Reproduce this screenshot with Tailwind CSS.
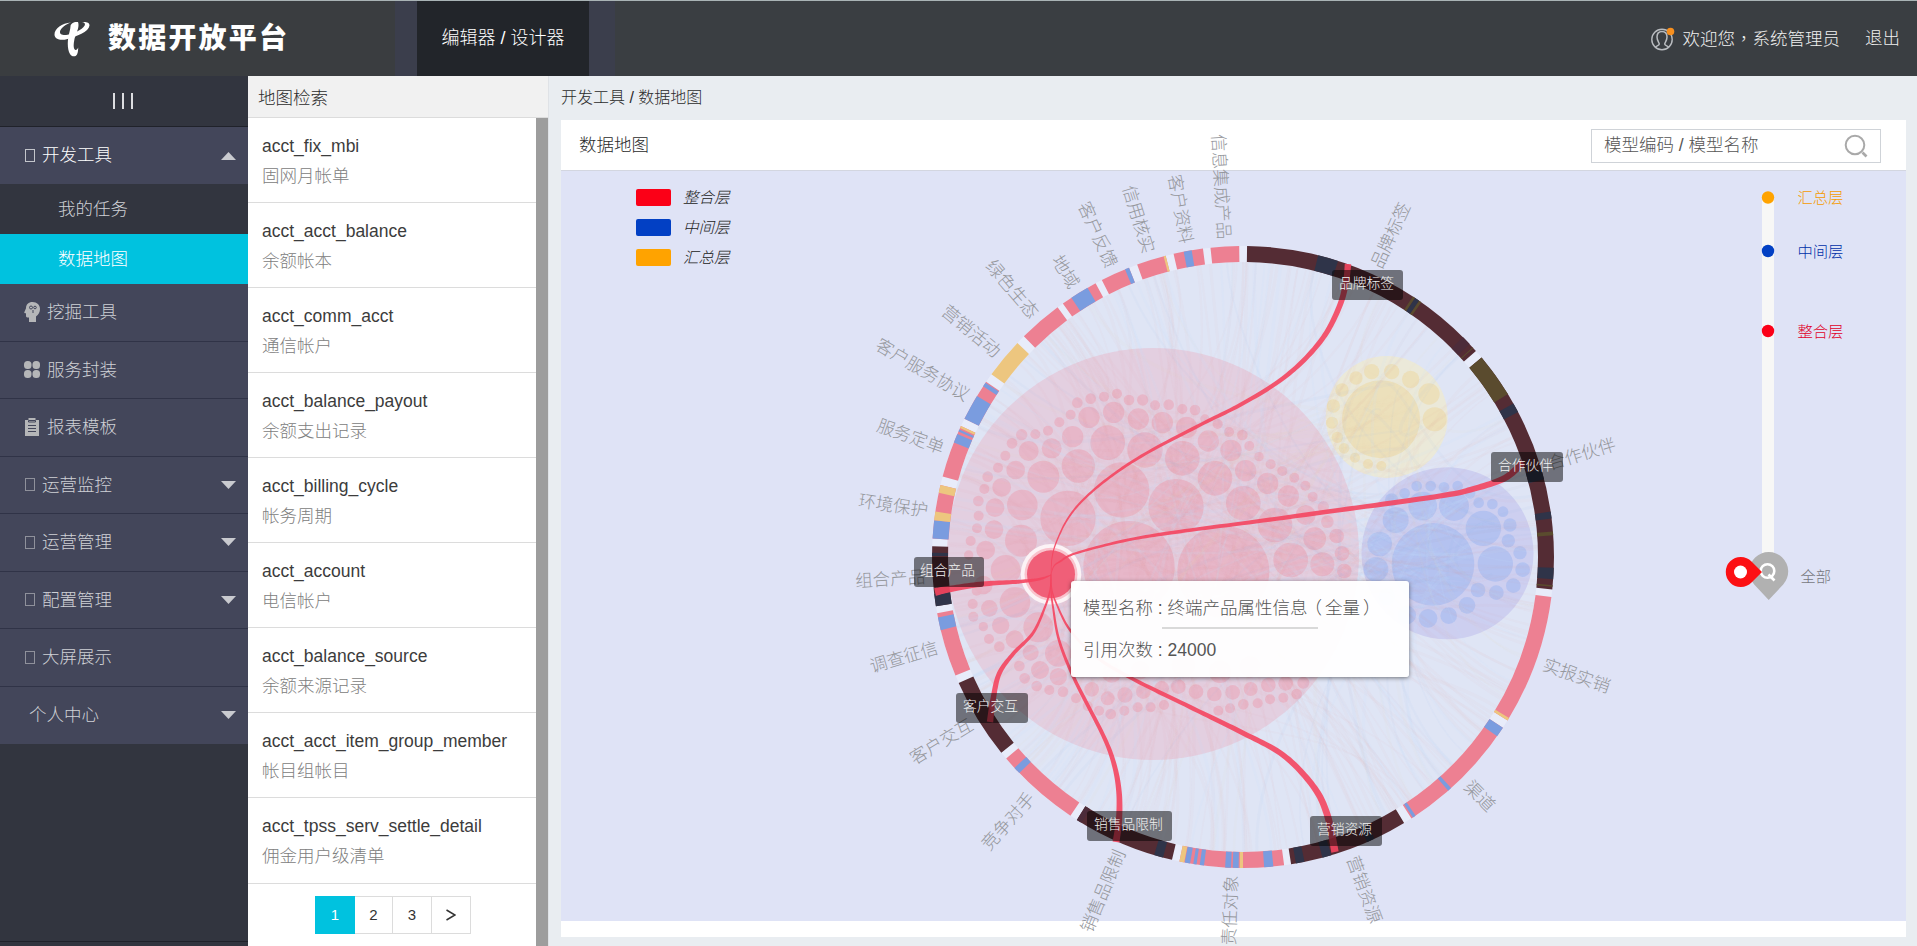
<!DOCTYPE html>
<html lang="zh-CN">
<head>
<meta charset="utf-8">
<title>数据开放平台</title>
<script src="https://cdn.jsdelivr.net/npm/@tailwindcss/browser@4"></script>
</head>
<body class="h-[946px] overflow-hidden bg-[#e9edf1] font-['Liberation_Sans','Noto_Sans_CJK_SC',sans-serif] text-[17.5px] font-light text-[#2b2b2b]">
<div class="flex h-[946px] flex-col overflow-hidden">

  <header class="flex h-[76px] shrink-0 border-t border-[#a9b3b5] bg-[#3a3e42] text-white">
    <div class="flex w-[395px] items-center bg-[#3a3d40] pl-[54px]">
      <svg class="h-[36px] w-[36px]" viewBox="0 0 36 36" fill="#fff">
        <path d="M17 1.500C8 2 .5 7.500.5 13.500c0 5 6.500 6.500 13 4.500C22 15.500 35 11 35.500 4.500 35.800 1.500 32 .5 28 1c3 .5 3.500 2 2.500 3.800C28 9 20 12.500 13.500 13.800 9 14.700 5.500 13.500 6 10.500 6.500 7 11.500 3.500 17 1.500z"/>
        <path d="M24 1c-4-.5-7.500 1.500-7.500 4.500 0 3-2 8-2.500 13-.6 6 0 11 2 14.500 1.500 2.800 5.500 3.200 7 .5 1.200-2.300 1-5 1.300-7-1 1.800-2 3-3.300 2.200-1.800-1.200-1.500-6-.7-9.700C21.500 13 26 6.500 24 1z"/>
      </svg>
      <span class="ml-[18px] text-[28px] leading-none font-black tracking-[2.2px] whitespace-nowrap">数据开放平台</span>
    </div>
    <div class="w-[22px] bg-[#3b3e4c]"></div>
    <div class="flex w-[172px] items-center justify-center bg-[#22252a] text-[18px]">编辑器 / 设计器</div>
    <div class="w-[26px] bg-[#3b3e4c]"></div>
    <div class="flex flex-1 items-center justify-end pr-[17px] text-[#f0f0f0]">
      <svg class="mr-[8px] h-[24px] w-[24px]" viewBox="0 0 24 24" fill="none">
        <circle cx="11" cy="12.500" r="10.200" stroke="#b9bcc0" stroke-width="1.400"/>
        <path d="M4.500 20.500c0-1.600 3.800-1.600 3.800-3.400 0-1.600-2.300-3.200-2.300-7C6 6.500 8 4.500 11 4.500s5 2 5 5.600c0 3.800-2.300 5.400-2.300 7 0 1.800 3.800 1.800 3.800 3.400" stroke="#b9bcc0" stroke-width="1.500"/>
        <circle cx="19.500" cy="4.500" r="3.800" fill="#f78f1e"/>
      </svg>
      <span>欢迎您<span class="font-['Noto_Sans_CJK_TC',sans-serif]" lang="zh-TW">，</span>系统管理员</span>
      <span class="ml-[25px]">退出</span>
    </div>
  </header>

  <div class="flex min-h-0 flex-1">
    <aside class="flex w-[248px] shrink-0 flex-col bg-[#32353f] text-[#cfd1d6]">
      <div class="flex h-[51px] items-center justify-center gap-[7px] border-b border-[#20222a] pr-[2px]">
        <i class="h-[16px] w-[2px] bg-[#dcdde0]"></i><i class="h-[16px] w-[2px] bg-[#dcdde0]"></i><i class="h-[16px] w-[2px] bg-[#dcdde0]"></i>
      </div>
      <div class="flex h-[57px] items-center bg-[#43465a] pl-[25px] text-white">
        <i class="h-[13px] w-[10px] border border-[#c3c5cb]"></i><span class="ml-[7px]">开发工具</span>
        <svg class="mr-[12px] ml-auto h-[8px] w-[15px]" viewBox="0 0 15 8"><path d="M0 8h15L7.500 0z" fill="#c9cacf"/></svg>
      </div>
      <div class="flex h-[50px] items-center pl-[58px]">我的任务</div>
      <div class="flex h-[50px] items-center bg-[#00c2df] pl-[58px] text-white">数据地图</div>
      <div class="flex h-[57.5px] items-center border-b border-[#303347] bg-[#43465a] pl-[24px]">
        <svg class="h-[20px] w-[16px]" viewBox="0 0 16 20"><path d="M8.500 0C4.500 0 2 2.500 2 6.200L.3 10.300c-.2.600.1.900.6.900H2V14c0 .9.500 1.400 1.300 1.400H5V20h7v-5.500c2.500-1.700 4-4.500 4-7.500C16 3 13 0 8.500 0z" fill="#b5b6b8"/><g fill="none" stroke="#43465a"><circle cx="7" cy="5.500" r="1.500"/><circle cx="11" cy="5.500" r="1.300"/><path d="M9 8v3"/></g></svg>
        <span class="ml-[7px]">挖掘工具</span>
      </div>
      <div class="flex h-[57.5px] items-center border-b border-[#303347] bg-[#43465a] pl-[24px]">
        <svg class="h-[17px] w-[16px]" viewBox="0 0 16 17" fill="#b5b6b8"><rect width="7.500" height="8" rx="3.500"/><rect x="8.500" width="7.500" height="8" rx="3.500"/><rect y="9" width="7.500" height="8" rx="3.500"/><rect x="8.500" y="9" width="7.500" height="8" rx="3.500"/></svg>
        <span class="ml-[7px]">服务封装</span>
      </div>
      <div class="flex h-[57.5px] items-center border-b border-[#303347] bg-[#43465a] pl-[25px]">
        <svg class="h-[18px] w-[14px]" viewBox="0 0 14 18"><path d="M0 2h3.500V0h7v2H14v16H0z" fill="#b5b6b8"/><path d="M3.500 2.500h7v1.500h-7zM3 7.500h8M3 10.500h8M3 13.500h8" stroke="#43465a" fill="none"/></svg>
        <span class="ml-[8px]">报表模板</span>
      </div>
      <div class="flex h-[57.5px] items-center border-b border-[#303347] bg-[#43465a] pl-[25px]">
        <i class="h-[13px] w-[10px] border border-[#8f919b]"></i><span class="ml-[7px]">运营监控</span>
        <svg class="mr-[12px] ml-auto h-[8px] w-[15px]" viewBox="0 0 15 8"><path d="M0 0h15L7.500 8z" fill="#c9cacf"/></svg>
      </div>
      <div class="flex h-[57.5px] items-center border-b border-[#303347] bg-[#43465a] pl-[25px]">
        <i class="h-[13px] w-[10px] border border-[#8f919b]"></i><span class="ml-[7px]">运营管理</span>
        <svg class="mr-[12px] ml-auto h-[8px] w-[15px]" viewBox="0 0 15 8"><path d="M0 0h15L7.500 8z" fill="#c9cacf"/></svg>
      </div>
      <div class="flex h-[57.5px] items-center border-b border-[#303347] bg-[#43465a] pl-[25px]">
        <i class="h-[13px] w-[10px] border border-[#8f919b]"></i><span class="ml-[7px]">配置管理</span>
        <svg class="mr-[12px] ml-auto h-[8px] w-[15px]" viewBox="0 0 15 8"><path d="M0 0h15L7.500 8z" fill="#c9cacf"/></svg>
      </div>
      <div class="flex h-[57.5px] items-center border-b border-[#303347] bg-[#43465a] pl-[25px]">
        <i class="h-[13px] w-[10px] border border-[#8f919b]"></i><span class="ml-[7px]">大屏展示</span>
      </div>
      <div class="flex h-[57.5px] items-center bg-[#43465a] pl-[29px]">
        <span>个人中心</span>
        <svg class="mr-[12px] ml-auto h-[8px] w-[15px]" viewBox="0 0 15 8"><path d="M0 0h15L7.500 8z" fill="#c9cacf"/></svg>
      </div>
      <div class="mt-auto mb-[4px] h-[1px] bg-[#20222a]"></div>
    </aside>

    <section class="flex w-[300px] shrink-0 flex-col bg-white">
      <div class="flex h-[42px] shrink-0 items-center border-b border-[#dcdcdc] bg-[#f1f1f1] pt-[4px] pl-[10px]">地图检索</div>
      <div class="flex min-h-0 flex-1">
        <div class="w-[288px]">
          <div class="flex h-[85px] flex-col justify-center border-b border-[#dcdcdc] pt-[2px] pl-[14px] leading-[30px]"><span class="text-[#3c3c3c]">acct_fix_mbi</span><span class="text-[#808080]">固网月帐单</span></div>
          <div class="flex h-[85px] flex-col justify-center border-b border-[#dcdcdc] pt-[2px] pl-[14px] leading-[30px]"><span class="text-[#3c3c3c]">acct_acct_balance</span><span class="text-[#808080]">余额帐本</span></div>
          <div class="flex h-[85px] flex-col justify-center border-b border-[#dcdcdc] pt-[2px] pl-[14px] leading-[30px]"><span class="text-[#3c3c3c]">acct_comm_acct</span><span class="text-[#808080]">通信帐户</span></div>
          <div class="flex h-[85px] flex-col justify-center border-b border-[#dcdcdc] pt-[2px] pl-[14px] leading-[30px]"><span class="text-[#3c3c3c]">acct_balance_payout</span><span class="text-[#808080]">余额支出记录</span></div>
          <div class="flex h-[85px] flex-col justify-center border-b border-[#dcdcdc] pt-[2px] pl-[14px] leading-[30px]"><span class="text-[#3c3c3c]">acct_billing_cycle</span><span class="text-[#808080]">帐务周期</span></div>
          <div class="flex h-[85px] flex-col justify-center border-b border-[#dcdcdc] pt-[2px] pl-[14px] leading-[30px]"><span class="text-[#3c3c3c]">acct_account</span><span class="text-[#808080]">电信帐户</span></div>
          <div class="flex h-[85px] flex-col justify-center border-b border-[#dcdcdc] pt-[2px] pl-[14px] leading-[30px]"><span class="text-[#3c3c3c]">acct_balance_source</span><span class="text-[#808080]">余额来源记录</span></div>
          <div class="flex h-[85px] flex-col justify-center border-b border-[#dcdcdc] pt-[2px] pl-[14px] leading-[30px]"><span class="text-[#3c3c3c]">acct_acct_item_group_member</span><span class="text-[#808080]">帐目组帐目</span></div>
          <div class="flex h-[86px] flex-col justify-center border-b border-[#dcdcdc] pt-[1px] pl-[14px] leading-[30px]"><span class="text-[#3c3c3c]">acct_tpss_serv_settle_detail</span><span class="text-[#808080]">佣金用户级清单</span></div>
          <div class="mt-[12px] ml-[67px] flex h-[38px] text-[15px] text-[#333]">
            <span class="flex w-[40px] items-center justify-center bg-[#00c2df] text-white">1</span>
            <span class="flex w-[38px] items-center justify-center border-y border-r border-[#dcdcdc]">2</span>
            <span class="flex w-[39px] items-center justify-center border-y border-r border-[#dcdcdc]">3</span>
            <span class="flex w-[39px] items-center justify-center border-y border-r border-[#dcdcdc]"><svg class="h-[12px] w-[10px]" viewBox="0 0 10 12" fill="none" stroke="#333" stroke-width="1.500"><path d="M.5 1l8.500 5-8.500 5"/></svg></span>
          </div>
        </div>
        <div class="w-[12px] bg-[#9d9d9d]"></div>
      </div>
    </section>

    <main class="flex flex-1 flex-col border-l border-[#dfe2e6] pr-[11px] pl-[12px]">
      <div class="flex h-[44px] shrink-0 items-center text-[16px]">开发工具 / 数据地图</div>
      <div class="flex h-[817px] flex-col bg-white">
        <div class="flex h-[51px] shrink-0 items-center justify-between border-b border-[#d3d6e0] pr-[25px] pl-[18px]">
          <span>数据地图</span>
          <div class="mt-[1px] flex h-[34px] w-[290px] items-center justify-between border border-[#cfd3d8] pr-[12px] pl-[12px] text-[#555]">
            <span>模型编码 / 模型名称</span>
            <svg class="h-[24px] w-[24px]" viewBox="0 0 24 24" fill="none" stroke="#a9a9a9"><circle cx="11" cy="11" r="9.300" stroke-width="2"/><path d="M18.500 18.500l4 4" stroke-width="2.600"/></svg>
          </div>
        </div>

        <div class="relative h-[750px] bg-[#dfe3f6]">
          <svg class="absolute inset-0 h-[750px] w-[1345px] overflow-visible" viewBox="561 171 1345 750">
            <g id="disc"></g>
            <g id="bubbles"></g>
            <g id="chords" fill="none"></g>
            <g id="ring"></g>
            <g id="labels" fill="#95979c" font-size="17.500"></g>
            <circle cx="1051" cy="574.300" r="30.300" fill="#fcf3f6"/>
            <circle cx="1051" cy="574.300" r="26.500" fill="#f9c3cd"/>
            <circle cx="1051" cy="574.300" r="24" fill="#f05f78"/>
            <g id="links" fill="#f4455f" fill-opacity=".9"></g>
          </svg>

          <div class="absolute top-[18px] left-[75px] flex flex-col gap-[13px] text-[15.5px] leading-[17px] text-[#222] italic">
            <div class="flex items-center"><i class="mr-[12px] h-[17px] w-[35px] rounded-[2px] bg-[#fb0017]"></i>整合层</div>
            <div class="flex items-center"><i class="mr-[12px] h-[17px] w-[35px] rounded-[2px] bg-[#0240c4]"></i>中间层</div>
            <div class="flex items-center"><i class="mr-[12px] h-[17px] w-[35px] rounded-[2px] bg-[#ffa300]"></i>汇总层</div>
          </div>

          <svg class="absolute top-0 left-[1150px] h-[440px] w-[195px]" viewBox="1711 171 195 440">
            <rect x="1762" y="197" width="12" height="356" fill="#f7f7f6"/>
            <circle cx="1768" cy="197.500" r="6.200" fill="#ffa300"/>
            <circle cx="1768" cy="251" r="6.200" fill="#0240c4"/>
            <circle cx="1768" cy="331" r="6.200" fill="#fb0017"/>
            <path d="M1768.700 600l-14.500-15.500a19.500 19.500 0 1 1 29 0z" fill="#b1b1b1"/>
            <circle cx="1767.500" cy="571" r="6.800" fill="none" stroke="#fff" stroke-width="2.600"/>
            <path d="M1768.500 574.500l6 6" stroke="#fff" stroke-width="2.600"/>
            <path d="M1762 572l-10.500 10.500a15 15 0 1 1 0-21z" fill="#fc1013"/>
            <circle cx="1740.500" cy="572" r="6.500" fill="#fff"/>
            <g font-size="15.300"><text x="1797.500" y="203" fill="#f59a00">汇总层</text><text x="1797.500" y="256.500" fill="#0030a8">中间层</text><text x="1797.500" y="336.500" fill="#e00028">整合层</text><text x="1800.500" y="582" fill="#77787e">全部</text></g>
          </svg>

          <div class="absolute top-[99px] left-[771px] flex h-[30px] w-[71px] items-center rounded-[3px] bg-black/50 pb-[2px] pl-[7px] text-[13.75px] text-[#f2f2f2]">品牌标签</div>
          <div class="absolute top-[281px] left-[930px] flex h-[30px] w-[72px] items-center rounded-[3px] bg-black/50 pb-[2px] pl-[7px] text-[13.75px] text-[#f2f2f2]">合作伙伴</div>
          <div class="absolute top-[386px] left-[353px] flex h-[30px] w-[70px] items-center rounded-[3px] bg-black/50 pb-[2px] pl-[6px] text-[13.75px] text-[#f2f2f2]">组合产品</div>
          <div class="absolute top-[522px] left-[395px] flex h-[30px] w-[72px] items-center rounded-[3px] bg-black/50 pb-[2px] pl-[7px] text-[13.75px] text-[#f2f2f2]">客户交互</div>
          <div class="absolute top-[640px] left-[526px] flex h-[30px] w-[85px] items-center rounded-[3px] bg-black/50 pb-[2px] pl-[7px] text-[13.75px] text-[#f2f2f2]">销售品限制</div>
          <div class="absolute top-[645px] left-[749px] flex h-[30px] w-[72px] items-center rounded-[3px] bg-black/50 pb-[2px] pl-[7px] text-[13.75px] text-[#f2f2f2]">营销资源</div>

          <div class="absolute top-[410px] left-[510px] flex h-[96px] w-[338px] flex-col rounded-[3px] bg-white/96 pt-[8px] pl-[12px] text-[#555] shadow-[0_1px_4px_rgba(0,0,0,0.5)]">
            <div class="flex h-[38px] items-center whitespace-pre">模型名称 : 终端产品属性信息<span class="-ml-[3px] mr-[3px]">（</span>全量<span class="ml-[3px]">）</span></div>
            <div class="ml-[79px] h-[2px] w-[156px] bg-[#d9d9d9]"></div>
            <div class="flex h-[42px] items-center">引用次数 : 24000</div>
          </div>
        </div>
      </div>
    </main>
  </div>
</div>

<script>
const NS = 'http://www.w3.org/2000/svg', CX = 1243, CY = 557, RO = 311, RI = 295;
const el = (parent, tag, attrs, text) => {
  const e = document.createElementNS(NS, tag);
  for (const k in attrs) e.setAttribute(k, attrs[k]);
  if (text) e.textContent = text;
  document.getElementById(parent).appendChild(e);
};
const pt = (a, r) => [CX + r * Math.sin(a * Math.PI / 180), CY - r * Math.cos(a * Math.PI / 180)];
const arc = (a, b, ro, ri) => {
  const p = [pt(a, ro), pt(b, ro), pt(b, ri), pt(a, ri)];
  return `M${p[0]}A${ro} ${ro} 0 0 1 ${p[1]}L${p[2]}A${ri} ${ri} 0 0 0 ${p[3]}Z`;
};

el('disc', 'circle', {cx: CX, cy: CY, r: RO, fill: '#eef2fd', 'fill-opacity': .6});
el('disc', 'circle', {cx: CX, cy: CY, r: RI, fill: '#dfe5f5'});

// Colours: P pink, B blue, Y yellow; dark variants for highlighted groups: D, N, O, M.
const C = {P: '#ed8092', B: '#7a9cdf', Y: '#edc67f', D: '#542c34', N: '#2f3449', O: '#5a4b2e', M: '#4c2c3a'};
const groups = [
  ['品牌标签', .75, 48.5, 'D', [[14, 17.8, 'N'], [33.1, 33.6, 'O'], [33.6, 34.5, 'N'], [34.5, 35, 'O'], [45, 46.8, 'M'], [47.6, 47.8, 'O']]],
  ['合作伙伴', 50.1, 96, 'D', [[50.1, 58.4, 'O'], [60.4, 62.2, 'N'], [73.500, 75.500, 'N'], [81.6, 82.9, 'N'], [85.3, 86, 'O'], [92, 94.1, 'N'], [95.200, 95.500, 'O']]],
  ['实报实销', 97.4, 121.7, 'P', [[121.2, 121.7, 'Y']]],
  ['渠道', 123.3, 147.2, 'P', [[123.3, 125.2, 'B'], [138, 138.7, 'B'], [146.3, 146.9, 'B']]],
  ['营销资源', 148.8, 171.1, 'D', [[155, 156.500, 'N'], [163.5, 165.2, 'N'], [168.6, 170.2, 'N']]],
  ['责任对象', 172.4, 191.8, 'P', [[174.4, 176.1, 'B'], [180, 180.6, 'Y'], [180.8, 181.9, 'B'], [182.2, 183.3, 'B'], [187.2, 188, 'B'], [188.6, 189.2, 'B'], [189.800, 190.8, 'B'], [190.9, 191.8, 'Y']]],
  ['销售品限制', 193.2, 212.3, 'D', [[194.9, 196.6, 'N'], [211.3, 212.3, 'M']]],
  ['竞争对手', 213.7, 229.6, 'P', [[226, 227.3, 'B']]],
  ['客户交互', 231, 246.1, 'D', []],
  ['调查征信', 247.6, 259.6, 'P', [[256.4, 258.8, 'B']]],
  ['组合产品', 260.9, 272, 'D', [[260.9, 263.2, 'N'], [270.200, 270.800, 'N']]],
  ['环境保护', 273.4, 283.4, 'P', [[273.4, 276.8, 'B'], [276.8, 278.4, 'Y'], [281.9, 283.4, 'Y']]],
  ['服务定单', 285, 294.9, 'P', [[291.6, 293.3, 'B'], [293.8, 294.2, 'B'], [294.5, 294.9, 'Y']]],
  ['客户服务协议', 296.4, 304.3, 'P', [[296.4, 301.2, 'B'], [303.3, 304.1, 'B']]],
  ['营销活动', 306, 313.5, 'Y', []],
  ['绿色生态', 315.2, 323.4, 'P', []],
  ['地域', 324.6, 331.7, 'P', [[326.5, 330, 'B']]],
  ['客户反馈', 333, 338.5, 'P', [[337.7, 338.5, 'B']]],
  ['信用核实', 340.1, 345.6, 'P', [[345.2, 345.6, 'Y']]],
  ['客户资料', 347.1, 352.6, 'P', [[349, 350.5, 'B']]],
  ['信息集成产品', 354, 359.3, 'P', []]
];
for (const [name, a, b, base, subs] of groups) {
  el('ring', 'path', {d: arc(a, b, RO, RI), fill: C[base]});
  for (const [s, e, c] of subs) el('ring', 'path', {d: arc(s, e, RO, RI), fill: C[c]});
  const mid = (a + b) / 2, left = mid > 180, [x, y] = pt(mid, left ? 318.5 : 319);
  el('labels', 'text', {
    'text-anchor': left ? 'end' : 'start', dy: '.36em',
    transform: `translate(${x} ${y}) rotate(${left ? mid - 270 : mid - 90})`
  }, name);
}

const bubbles = (ox, oy, fill, op, list) => list.forEach(([x, y, r]) =>
  el('bubbles', 'circle', {cx: ox + x / 3, cy: oy + y / 3, r: r / 3, fill, 'fill-opacity': op}));
el('bubbles', 'circle', {cx: 1153, cy: 554, r: 206, fill: '#e6c0d2', 'fill-opacity': .6});
el('bubbles', 'circle', {cx: 1386.7, cy: 417, r: 61, fill: '#ebe9d9'});
el('bubbles', 'circle', {cx: 1447.5, cy: 553.3, r: 86, fill: '#cdcff0'});
bubbles(940, 370, '#e8b3c4', .85, [
  [567,590,137],[850,605,138],[545,360,83],[384,445,83],[708,410,83],[503,218,52],[615,240,53],[415,288,50],[727,265,52],[825,325,52],
  [910,400,52],[1005,465,52],[1052,570,52],[310,320,48],[247,405,46],[243,512,48],[197,600,45],[225,697,46],[295,772,45],[355,850,40],
  [447,142,32],[521,127,32],[595,147,32],[667,158,32],[740,172,32],[805,213,32],[873,241,32],[917,302,32],[983,340,32],[1045,378,32],
  [1097,435,30],[1124,506,34],[1147,583,36],[398,200,32],[335,235,30],[266,243,30],[227,300,28],[185,352,28],[165,413,28],[162,479,28],
  [137,540,28],[130,645,28],[148,715,25],[182,766,26],[224,808,27],[272,848,24],[300,900,27],[355,920,26],[412,98,16],[452,86,16],
  [492,80,15],[531,71,15],[567,90,16],[608,90,17],[645,106,15],[686,104,16],[727,117,15],[765,120,16],[795,147,14],[833,162,15],
  [867,186,15],[907,195,16],[928,228,15],[957,260,14],[992,283,15],[1027,303,15],[1063,323,15],[1096,347,15],[1118,380,15],[1150,410,17],
  [1162,455,19],[1190,498,22],[1206,550,22],[1213,603,22],[392,134,15],[358,157,15],[324,182,15],[286,193,15],[245,194,17],[216,220,16],
  [196,257,15],[174,293,15],[143,320,16],[133,357,15],[115,393,16],[116,437,15],[111,475,15],[92,513,15],[86,555,14],[110,662,15],
  [98,702,15],[100,740,15],[130,770,14],[147,807,15],[178,830,16],[238,888,16],[254,925,16],[290,948,16],[328,960,15],[369,965,16],
  [408,985,15],[455,958,22],[503,985,21],[555,975,23],[610,965,22],[665,955,22],[715,950,22],[768,965,22],[823,972,22],[878,967,22],
  [932,957,21],[985,945,22],[1037,940,22],[1090,938,18],[443,1008,15],[477,1022,15],[512,1032,16],[553,1022,15],[593,1012,15],[632,1012,15],
  [672,1005,15],[835,1022,15],[870,1015,15],[910,1003,16],[953,1000,15],[990,988,15],[1030,983,15],[1070,972,16],[515,908,30],[600,900,28],
  [730,885,36],[840,905,34],[930,890,32]
]);
bubbles(1240, 190, '#ecdcb0', .75, [
  [423,688,117],[395,545,23],[455,545,23],[512,568,26],[567,612,32],[584,688,36],[348,564,20],[306,600,20],[280,648,20],[276,698,18],
  [292,742,17],[312,775,16],[345,803,15],[384,822,15],[424,828,15]
]);
bubbles(1240, 500, '#aebef0', .8, [
  [579,193,124],[467,60,39],[419,132,37],[408,208,37],[548,18,43],[642,18,45],[730,85,53],[766,192,53],[716,8,16],[757,12,16],[789,35,16],
  [810,75,20],[805,122,20],[840,158,20],[848,209,22],[820,257,22],[769,278,22],[714,270,22],[681,316,25],[626,347,25],[564,355,28],[500,345,28],
  [530,-42,16],[572,-42,16],[612,-38,16],[653,-42,16],[494,-20,16],[455,0,20],[690,-20,16],[440,290,26]
]);

// Faint background relations between ring positions and the bubble clusters.
let seed = 7;
const rnd = () => (seed = (seed * 16807) % 2147483647) / 2147483647;
for (let i = 0; i < 420; i++) {
  const a = rnd() * 360, p = pt(a, RI), q = pt(a, 215 - rnd() * 50);
  const k = rnd(), ctr = k < .72 ? [1153, 560, 150] : k < .86 ? [1447, 553, 60] : [1386, 417, 40];
  const t = rnd() * 6.28, d = Math.sqrt(rnd()) * ctr[2];
  const e = [ctr[0] + d * Math.cos(t), ctr[1] + d * Math.sin(t)];
  const m = [(q[0] + e[0]) / 2, e[1] + (rnd() - .5) * 60];
  el('chords', 'path', {
    d: `M${p}C${q} ${m} ${e}`, 'stroke-width': 1.5 + rnd() * 2,
    stroke: k < .6 ? '#e88fa0' : k < .8 ? '#c8e2ff' : k < .9 ? '#8fa8ea' : '#ecd9ae', 'stroke-opacity': k < .6 ? .04 : k < .8 ? .1 : .05
  });
}

// Highlighted relations: tapered ribbons along a smooth curve.
const ribbon = (P, w0, w1) => {
  const S = [];
  for (let i = 0; i < P.length - 1; i++) {
    const a = P[i - 1] || P[i], b = P[i], c = P[i + 1], d = P[i + 2] || c;
    for (let j = 0; j < 12; j++) {
      const t = j / 12;
      S.push([0, 1].map(n => .5 * (2 * b[n] + (c[n] - a[n]) * t + (2 * a[n] - 5 * b[n] + 4 * c[n] - d[n]) * t * t + (3 * b[n] - a[n] - 3 * c[n] + d[n]) * t ** 3)));
    }
  }
  S.push(P[P.length - 1]);
  const L = [], R = [];
  S.forEach((s, i) => {
    const u = S[Math.max(0, i - 1)], v = S[Math.min(S.length - 1, i + 1)];
    const dx = v[0] - u[0], dy = v[1] - u[1], n = Math.hypot(dx, dy) || 1, w = (w0 + (w1 - w0) * i / S.length) / 2;
    L.push([s[0] - dy / n * w, s[1] + dx / n * w]);
    R.unshift([s[0] + dy / n * w, s[1] - dx / n * w]);
  });
  el('links', 'path', {d: 'M' + L.concat(R).join('L') + 'Z'});
};
ribbon([[1051,574],[1052,558],[1056,543],[1067,520],[1083,500],[1110,477],[1145,454],[1200,425],[1240,405],[1275,384],[1302,362],[1325,335],[1340,305],[1346,282],[1348,264]], .5, 6.5);
ribbon([[1051,574],[1054,566],[1060,561.5],[1075,553.5],[1123,541],[1173,532.500],[1256,521.500],[1340,510],[1440,496],[1473,489],[1505,478],[1523,462]], .5, 7);
ribbon([[1051,575],[1040,579],[1021,581.500],[983,584],[950,589],[935,592]], 1, 8);
ribbon([[1051,574],[1050,590],[1045,607],[1033,633],[1013,654],[999,674],[993,700],[990,722]], .5, 6.5);
ribbon([[1051,574],[1051,590],[1053,607],[1059,640],[1074,678],[1103,735],[1114,764],[1119,792],[1119,820],[1116,842]], .5, 7);
ribbon([[1051,574],[1052,590],[1057,605],[1070,630],[1095,656],[1131,678],[1190,707],[1240,731.500],[1283,755],[1313,786],[1327,814],[1335,852]], .5, 7.5);
</script>
</body>
</html>
